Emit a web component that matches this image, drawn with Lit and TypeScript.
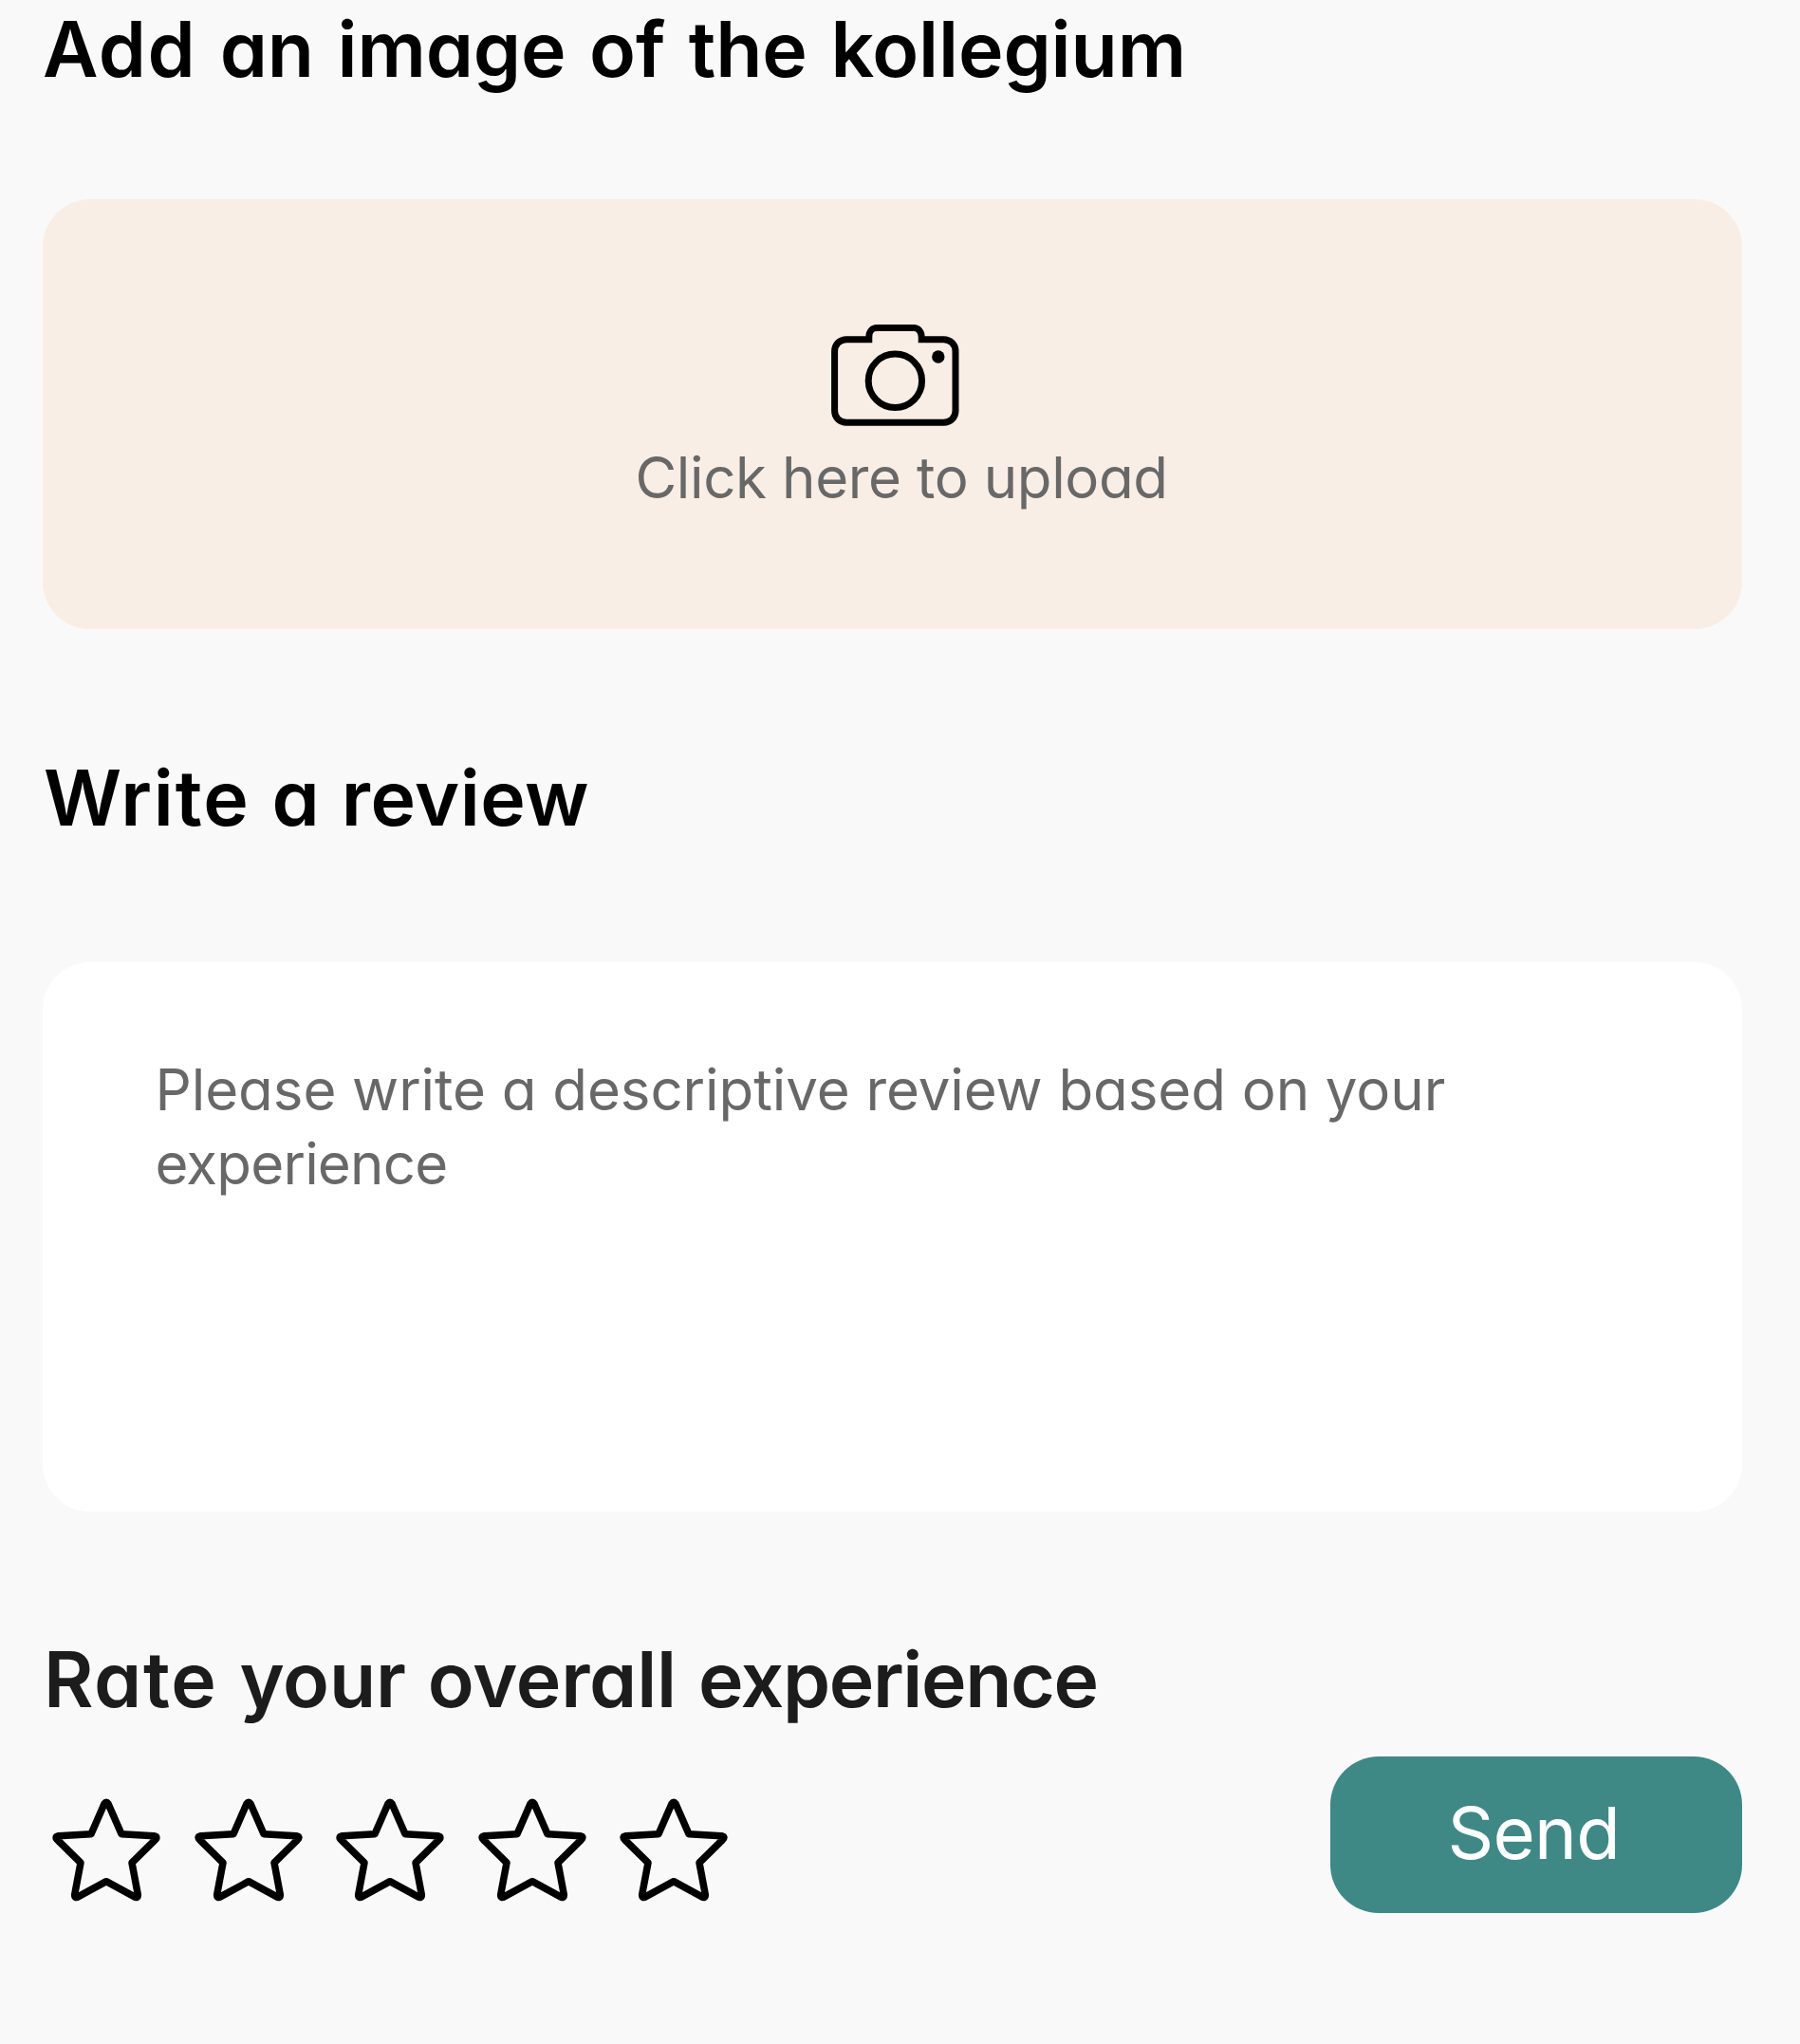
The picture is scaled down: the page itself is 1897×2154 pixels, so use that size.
import { LitElement, html, css } from "lit";
import { customElement, property, state } from "lit/decorators.js";

@customElement("camera-icon")
export class CameraIcon extends LitElement {
  static styles = css`
    :host { display: block; width: 135px; height: 107px; }
    svg { display: block; width: 100%; height: 100%; overflow: visible; }
    .line { fill: none; stroke: #000; stroke-width: 7; }
  `;

  render() {
    return html`
      <svg viewBox="0 0 135 107" aria-hidden="true">
        <path class="line" d="M39.8 15.7H16C9 15.7 3.6 21 3.6 28V91C3.6 98 9 103.2 16 103.2H118.6C125.6 103.2 131 98 131 91V28C131 21 125.6 15.7 118.6 15.7H95.2V13C95.2 7 91.5 3.6 87 3.6H48C43.5 3.6 39.8 7 39.8 13Z" />
        <circle class="line" cx="67.4" cy="59.3" r="28.2" />
        <circle cx="112.8" cy="34" r="6.7" />
      </svg>
    `;
  }
}

@customElement("star-icon")
export class StarIcon extends LitElement {
  @property({ type: Boolean, reflect: true }) selected = false;

  static styles = css`
    :host { display: block; width: 114px; height: 110px; }
    svg { display: block; width: 100%; height: 100%; overflow: visible; }
    path { fill: none; stroke: #000; stroke-width: 22.5; stroke-linejoin: round; }
    :host([selected]) path { fill: #000; }
  `;

  render() {
    return html`
      <svg viewBox="0 0 342 330" aria-hidden="true">
        <path d="M165 20Q171 12 177 20L219 116L322 122Q336 125 325 135L252 207L271 308Q271 321 259 314L171 266L83 314Q71 321 71 308L90 207L17 135Q6 125 20 122L123 116Z" />
      </svg>
    `;
  }
}

@customElement("app-root")
export class AppRoot extends LitElement {
  @state() private rating = 0;

  static styles = css`
    :host {
      display: block;
      height: 2154px;
      overflow: hidden;
      background: #f9f9f9;
      font-family: Inter, "Open Sans", sans-serif;
      font-feature-settings: "cv11" 1;
    }
    .page {
      box-sizing: border-box;
      height: 2154px;
      padding: 2px 61.5px 0 45px;
      display: flex;
      flex-direction: column;
      color: #000;
    }
    .title {
      margin: 0;
      font-size: 80.5px;
      line-height: 100px;
      font-weight: 600;
      white-space: nowrap;
    }
    .title-image { letter-spacing: -0.15px; word-spacing: 4.5px; }
    .title-image .lead { letter-spacing: 1.4px; }
    .title-review { margin-top: 128px; padding-left: 1px; letter-spacing: 0.45px; word-spacing: 2px; }
    .title-review .lead { letter-spacing: 1.85px; }
    .title-rating { margin-top: 127px; padding-left: 1px; letter-spacing: -0.2px; word-spacing: 3px; color: #1c1c1c; }
    .title-rating .lead { letter-spacing: 1.6px; }
    .title-rating .tail { letter-spacing: -1.4px; }
    button {
      appearance: none;
      border: 0;
      margin: 0;
      padding: 0;
      font: inherit;
      font-feature-settings: inherit;
      cursor: pointer;
    }
    .upload {
      box-sizing: border-box;
      margin-top: 107.5px;
      height: 453.5px;
      padding: 132.5px 0 0 5.5px;
      border-radius: 50px;
      background: #f9eee5;
      display: flex;
      flex-direction: column;
      align-items: center;
      color: #686868;
    }
    .upload-label {
      margin: 13.5px 0 0 14px;
      font-size: 60px;
      line-height: 80px;
      letter-spacing: -0.39px;
      white-space: nowrap;
    }
    .review {
      box-sizing: border-box;
      margin-top: 123px;
      height: 579px;
      padding: 95px 118px 0 118.5px;
      border-radius: 50px;
      background: #fff;
      color: #686868;
      font-size: 60px;
      line-height: 78px;
      white-space: nowrap;
    }
    .line { display: block; letter-spacing: -0.07px; }
    .line-last { letter-spacing: -0.8px; }
    .footer {
      display: flex;
      justify-content: space-between;
      align-items: flex-start;
      margin-top: 30.5px;
    }
    .stars { display: flex; gap: 35.6px; padding: 43.5px 0 0 10px; }
    .send {
      box-sizing: border-box;
      width: 433.5px;
      height: 165.5px;
      padding: 0 5px 5px 0;
      border-radius: 51px;
      background: #3e8986;
      color: #fff;
      font-size: 76px;
      line-height: 100px;
      letter-spacing: -0.7px;
    }
  `;

  render() {
    return html`
      <main class="page">
        <h2 class="title title-image"><span class="lead">Add</span> an image of the kollegium</h2>
        <button class="upload">
          <camera-icon></camera-icon>
          <span class="upload-label">Click here to upload</span>
        </button>
        <h2 class="title title-review"><span class="lead">Write</span> a review</h2>
        <div class="review">
          <span class="line">Please write a descriptive review based on your</span>
          <span class="line line-last">experience</span>
        </div>
        <h2 class="title title-rating"><span class="lead">Rate</span> your overall <span class="tail">experience</span></h2>
        <div class="footer">
          <div class="stars">
            ${[1, 2, 3, 4, 5].map(
              (n) => html`<star-icon ?selected=${n <= this.rating} @click=${() => (this.rating = n)}></star-icon>`
            )}
          </div>
          <button class="send">Send</button>
        </div>
      </main>
    `;
  }
}
